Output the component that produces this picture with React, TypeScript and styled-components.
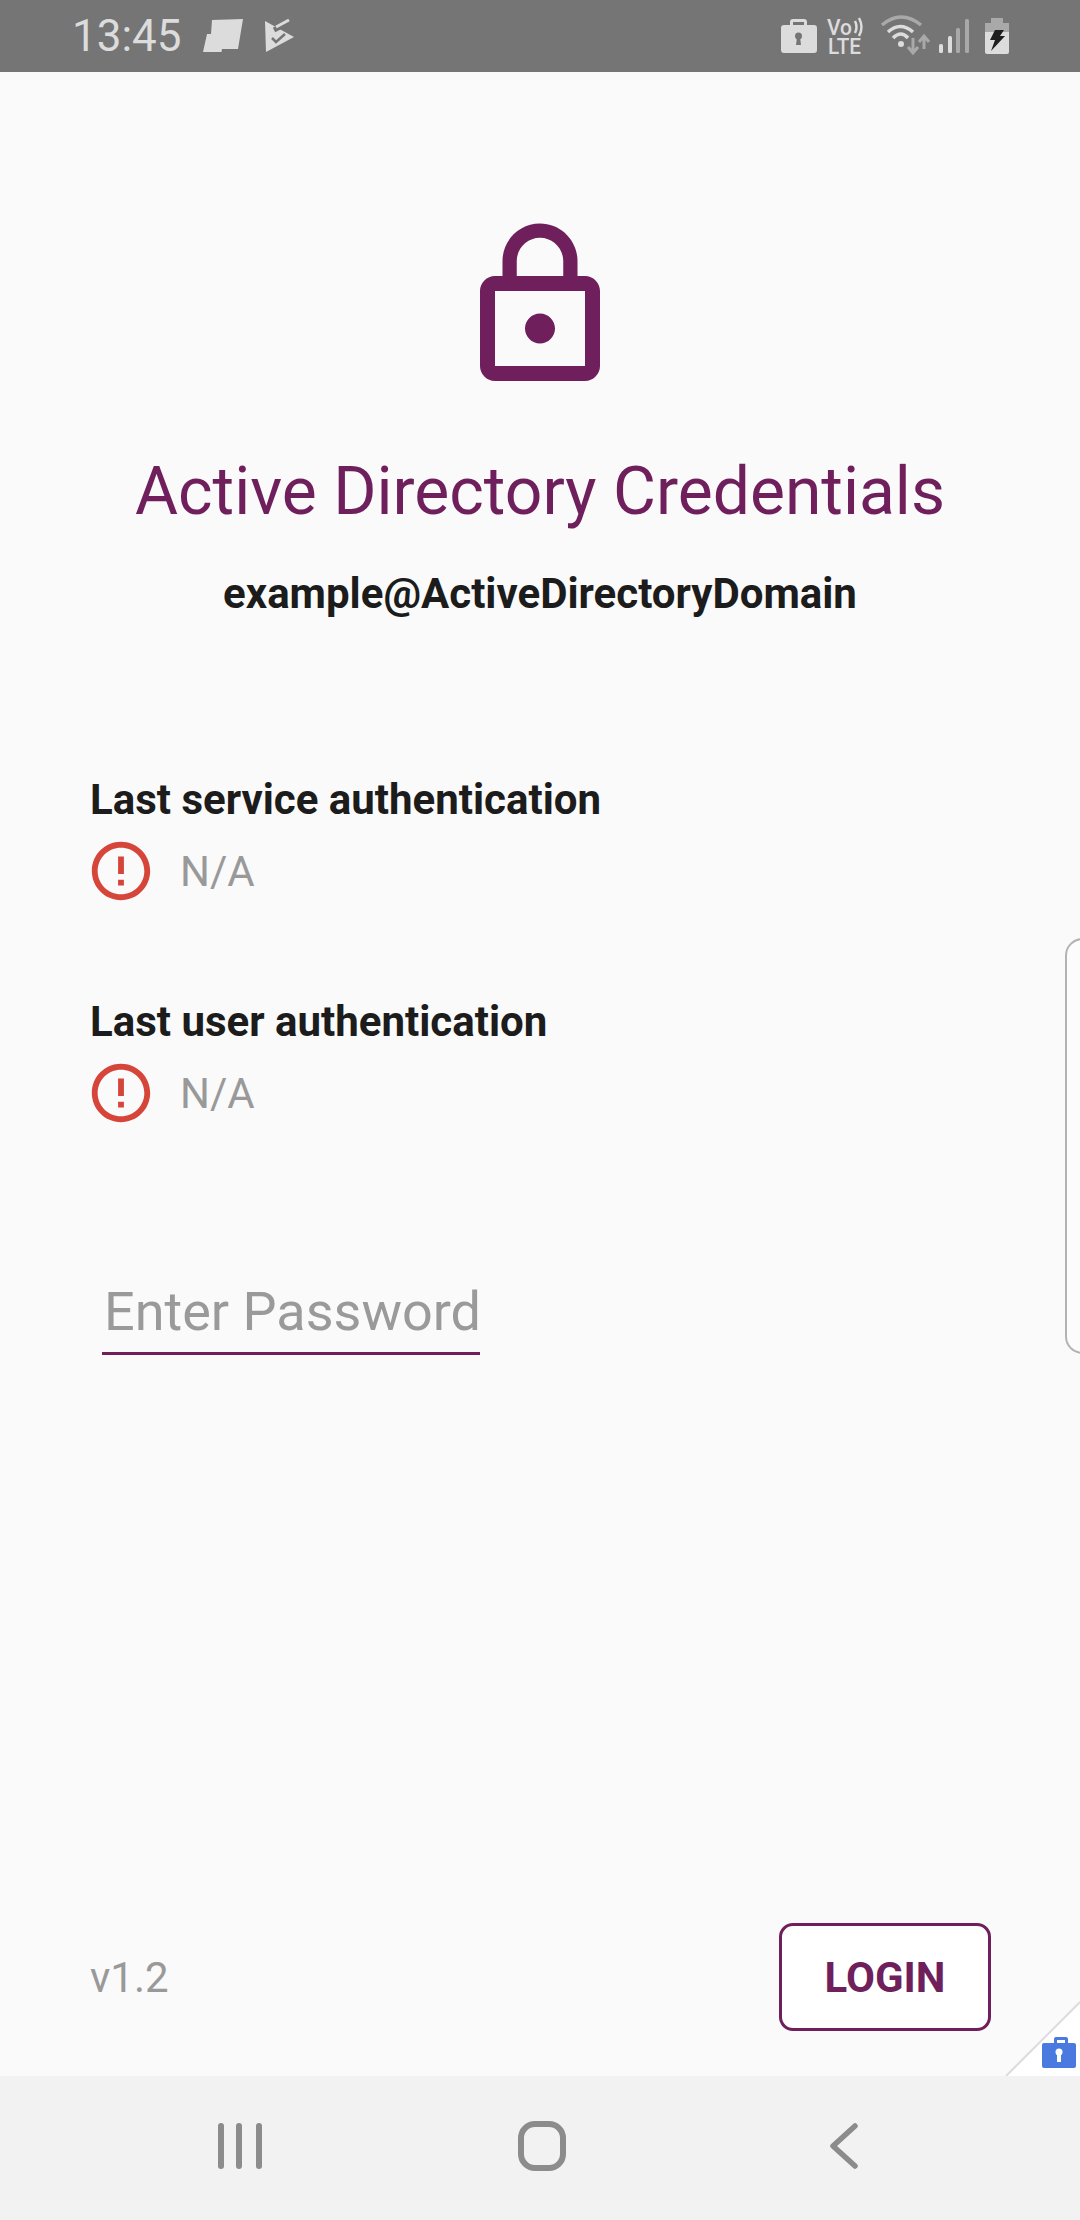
import styled, { createGlobalStyle } from "styled-components";

const GlobalStyle = createGlobalStyle`
  html, body {
    margin: 0;
    padding: 0;
    background: #fafafa;
    font-family: Roboto, "Liberation Sans", sans-serif;
  }
`;

const PURPLE = "#6e1f5c";

const Screen = styled.div`
  position: relative;
  width: 1080px;
  height: 2220px;
  display: flex;
  flex-direction: column;
  overflow: hidden;
  background: #fafafa;
`;

const StatusBar = styled.div`
  height: 72px;
  flex: none;
  background: #757575;
  display: flex;
  align-items: center;
  justify-content: space-between;
  padding: 0 71px 0 72px;
`;

const StatusGroup = styled.div`
  display: flex;
  align-items: center;
`;

const Clock = styled.span`
  font-size: 44px;
  line-height: 72px;
  color: #dcdcdc;
  margin-right: 21px;
`;

const StatusIcon = styled.svg<{ $gap?: number }>`
  display: block;
  flex: none;
  overflow: visible;
  margin-left: ${(p) => p.$gap ?? 0}px;
`;

const Main = styled.main`
  flex: 1;
  display: flex;
  flex-direction: column;
  padding: 144px 90px 45px;
`;

const Header = styled.header`
  display: flex;
  flex-direction: column;
  align-items: center;
`;

const Title = styled.h1`
  margin: 56px 0 0;
  font-size: 66px;
  line-height: 80px;
  font-weight: 400;
  color: ${PURPLE};
  white-space: nowrap;
`;

const Account = styled.div`
  margin-top: 34px;
  font-size: 42px;
  line-height: 56px;
  font-weight: 700;
  color: #1c1c1c;
`;

const Section = styled.section<{ $top: number }>`
  margin-top: ${(p) => p.$top}px;
`;

const Label = styled.div`
  font-size: 42px;
  line-height: 56px;
  font-weight: 700;
  color: #1c1c1c;
`;

const StatusRow = styled.div`
  display: flex;
  align-items: center;
  height: 70px;
  margin-top: 8px;
  margin-left: -4px;
`;

const Value = styled.span`
  margin-left: 24px;
  font-size: 42px;
  color: #999999;
`;

const PasswordField = styled.div`
  width: 378px;
  margin: 143px 0 0 12px;
  border-bottom: 3px solid ${PURPLE};
  font-size: 54px;
  line-height: 81px;
  color: #9a9a9a;
  padding-left: 2px;
  box-sizing: border-box;
  white-space: nowrap;
`;

const Footer = styled.footer`
  margin-top: auto;
  display: flex;
  align-items: center;
  justify-content: space-between;
`;

const Version = styled.span`
  font-size: 42px;
  color: #999999;
`;

const LoginButton = styled.button`
  width: 212px;
  height: 108px;
  box-sizing: border-box;
  border: 3.5px solid ${PURPLE};
  border-radius: 14px;
  background: #ffffff;
  color: ${PURPLE};
  font-family: inherit;
  font-size: 42px;
  font-weight: 700;
  margin-right: -1px;
`;

const NavBar = styled.nav`
  height: 144px;
  flex: none;
  box-sizing: border-box;
  background: #f2f2f2;
  display: grid;
  grid-template-columns: repeat(3, 302px);
  justify-items: center;
  align-items: center;
  padding: 0 0 5px 89px;
`;

const NavIcon = styled.svg`
  display: block;
`;

const EdgePanel = styled.div`
  position: absolute;
  top: 938px;
  right: -20px;
  width: 31px;
  height: 412px;
  border: 2px solid #b3b3b3;
  border-radius: 18px;
  background: #fcfcfc;
`;

const WorkBadge = styled.svg`
  position: absolute;
  right: 0;
  bottom: 144px;
  display: block;
`;

function ErrorIcon() {
  return (
    <svg width="70" height="70" viewBox="0 0 24 24" fill="#d6453a">
      <path d="M11 15h2v2h-2zm0-8h2v6h-2zm.99-5C6.47 2 2 6.48 2 12s4.47 10 9.99 10C17.52 22 22 17.52 22 12S17.52 2 11.99 2zM12 20c-4.42 0-8-3.58-8-8s3.58-8 8-8 8 3.58 8 8-3.58 8-8 8z" />
    </svg>
  );
}

function App() {
  return (
    <Screen>
      <GlobalStyle />
      <StatusBar>
        <StatusGroup>
          <Clock>13:45</Clock>
          <StatusIcon width="41" height="34" viewBox="0 0 41 34" fill="#dcdcdc">
            <path d="M9 1L40 0 35 30H19L18.5 33H0L4 15H8Z" />
          </StatusIcon>
          <StatusIcon $gap={21} width="28" height="33" viewBox="0 0 28 33">
            <path d="M0 1L29 17 1 32Z" fill="#dcdcdc" />
            <path d="M9 10L25 2" fill="none" stroke="#757575" strokeWidth="5" />
            <path d="M11 7L24 0" fill="none" stroke="#dcdcdc" strokeWidth="3" />
            <path d="M7 18L11 22 20 14" fill="none" stroke="#757575" strokeWidth="2.5" />
          </StatusIcon>
        </StatusGroup>
        <StatusGroup>
          <StatusIcon width="36" height="34" viewBox="0 0 36 34">
            <path d="M9 6V3Q9 0 12 0H23Q26 0 26 3V6H33Q36 6 36 9V31Q36 34 33 34H3Q0 34 0 31V9Q0 6 3 6ZM12 6H23V3H12Z" fill="#dcdcdc" fillRule="evenodd" />
            <circle cx="17.5" cy="17" r="3.5" fill="#757575" />
            <path d="M16 18H19L20 26H15Z" fill="#757575" />
          </StatusIcon>
          <StatusIcon $gap={10} width="36" height="36" viewBox="0 0 36 36">
            <text x="0" y="17" fontFamily="Roboto" fontWeight="500" fontSize="22" textLength="25" lengthAdjust="spacingAndGlyphs" fill="#dcdcdc">Vo</text>
            <path d="M28 3Q31 9 28 15M32 0Q37 9 32 18" fill="none" stroke="#dcdcdc" strokeWidth="2.5" />
            <text x="1" y="36" fontFamily="Roboto" fontWeight="500" fontSize="22" textLength="33" lengthAdjust="spacingAndGlyphs" fill="#dcdcdc">LTE</text>
          </StatusIcon>
          <StatusIcon $gap={18} width="49" height="38" viewBox="0 0 49 38">
            <path d="M1 8Q20 -8 40 8" fill="none" stroke="#a9a9a9" strokeWidth="3.5" />
            <path d="M7 15Q19 4 32 15" fill="none" stroke="#dcdcdc" strokeWidth="3.5" />
            <path d="M12 21Q20 13 27 21" fill="none" stroke="#dcdcdc" strokeWidth="3.5" />
            <circle cx="20" cy="27" r="3" fill="#dcdcdc" />
            <path d="M32 21V36M27 30L32 36 37 30" fill="none" stroke="#a9a9a9" strokeWidth="3" />
            <path d="M43 32V19M38 25L43 19 48 25" fill="none" stroke="#a9a9a9" strokeWidth="3" />
          </StatusIcon>
          <StatusIcon $gap={8} width="32" height="34" viewBox="0 0 32 34">
            <rect x="1" y="25" width="4" height="9" rx="1.5" fill="#dcdcdc" />
            <rect x="10" y="17" width="4" height="17" rx="1.5" fill="#dcdcdc" />
            <rect x="18" y="9" width="4" height="25" rx="1.5" fill="#a9a9a9" />
            <rect x="27" y="0" width="4" height="34" rx="1.5" fill="#a9a9a9" />
          </StatusIcon>
          <StatusIcon $gap={15} width="24" height="36" viewBox="0 0 24 36">
            <path d="M6 0H18V5H24V14H0V5H6Z" fill="#a9a9a9" />
            <path d="M0 14H24V34Q24 36 22 36H2Q0 36 0 34Z" fill="#dcdcdc" />
            <path d="M10 12H19L15 18H20L6 33 10 22H5Z" fill="#1e1e1e" />
          </StatusIcon>
        </StatusGroup>
      </StatusBar>

      <Main>
        <Header>
          <svg width="180" height="180" viewBox="0 0 24 24" fill={PURPLE}>
            <path d="M12 17c1.1 0 2-.9 2-2s-.9-2-2-2-2 .9-2 2 .9 2 2 2zm6-9h-1V6c0-2.76-2.24-5-5-5S7 3.24 7 6v2H6c-1.1 0-2 .9-2 2v10c0 1.1.9 2 2 2h12c1.1 0 2-.9 2-2V10c0-1.1-.9-2-2-2zM8.9 6c0-1.71 1.39-3.1 3.1-3.1s3.1 1.39 3.1 3.1v2H8.9V6zM18 20H6V10h12v10z" />
          </svg>
          <Title>Active Directory Credentials</Title>
          <Account>example@ActiveDirectoryDomain</Account>
        </Header>

        <Section $top={150}>
          <Label>Last service authentication</Label>
          <StatusRow>
            <ErrorIcon />
            <Value>N/A</Value>
          </StatusRow>
        </Section>

        <Section $top={88}>
          <Label>Last user authentication</Label>
          <StatusRow>
            <ErrorIcon />
            <Value>N/A</Value>
          </StatusRow>
        </Section>

        <PasswordField>Enter Password</PasswordField>

        <Footer>
          <Version>v1.2</Version>
          <LoginButton>LOGIN</LoginButton>
        </Footer>
      </Main>

      <NavBar>
        <NavIcon width="44" height="46" viewBox="0 0 44 46" fill="#8c8c8c">
          <rect x="0" y="0" width="6" height="46" rx="3" />
          <rect x="18" y="0" width="6" height="46" rx="3" />
          <rect x="38" y="0" width="6" height="46" rx="3" />
        </NavIcon>
        <NavIcon width="48" height="50" viewBox="0 0 48 50">
          <rect x="3" y="3" width="42" height="44" rx="14" fill="none" stroke="#8c8c8c" strokeWidth="6" />
        </NavIcon>
        <NavIcon width="30" height="46" viewBox="0 0 30 46">
          <path d="M26 3L4 23 26 43" fill="none" stroke="#8c8c8c" strokeWidth="5.5" strokeLinecap="round" strokeLinejoin="round" />
        </NavIcon>
      </NavBar>

      <EdgePanel />
      <WorkBadge width="76" height="76" viewBox="0 0 76 76">
        <path d="M76 2V76H2Z" fill="#ffffff" />
        <path d="M76 2L2 76" stroke="#dcdcdc" strokeWidth="2" />
        <path d="M50 43H40Q38 43 38 45V66Q38 68 40 68H70Q72 68 72 66V45Q72 43 70 43H64V39Q64 37 62 37H52Q50 37 50 39ZM53 40H61V43H53Z" fill="#4a7ae0" fillRule="evenodd" />
        <circle cx="55" cy="52" r="3.5" fill="#ffffff" />
        <rect x="53" y="52" width="4" height="10" fill="#ffffff" />
      </WorkBadge>
    </Screen>
  );
}

export default App;
